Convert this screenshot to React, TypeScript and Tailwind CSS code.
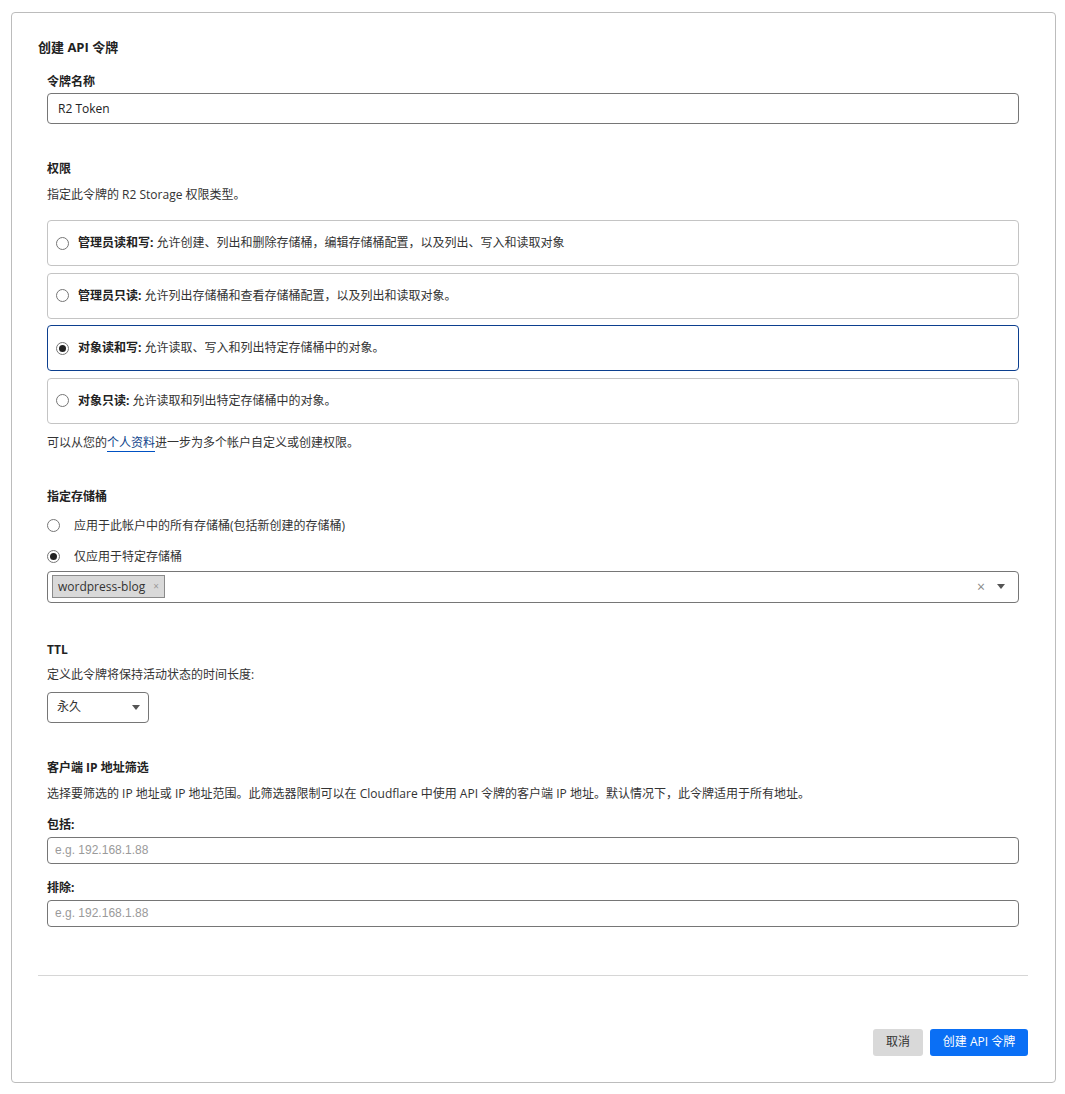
import React from "react";

const font = "font-['Open_Sans','Noto_Sans_CJK_SC',sans-serif]";

const Radio = ({ checked }: { checked?: boolean }) => (
  <span className="flex h-[13px] w-[13px] shrink-0 items-center justify-center rounded-full border border-[#767676] bg-white">
    {checked && <span className="h-[7px] w-[7px] rounded-full bg-[#222]" />}
  </span>
);

const Caret = () => <span className="h-0 w-0 border-x-[4px] border-t-[5px] border-x-transparent border-t-[#555]" />;

const permissions = [
  { title: "管理员读和写:", desc: "允许创建、列出和删除存储桶，编辑存储桶配置，以及列出、写入和读取对象" },
  { title: "管理员只读:", desc: "允许列出存储桶和查看存储桶配置，以及列出和读取对象。" },
  { title: "对象读和写:", desc: "允许读取、写入和列出特定存储桶中的对象。", checked: true },
  { title: "对象只读:", desc: "允许读取和列出特定存储桶中的对象。" },
];

const Label = ({ children, className = "" }: { children: React.ReactNode; className?: string }) => (
  <div className={`text-[12px] font-bold leading-[18px] text-[#222] ${className}`}>{children}</div>
);

const Text = ({ children, className = "" }: { children: React.ReactNode; className?: string }) => (
  <div className={`text-[12px] leading-[18px] text-[#333] ${className}`}>{children}</div>
);

export default function App() {
  return (
    <div className={`min-h-[1094px] bg-white pl-[11px] pt-[12px] ${font}`}>
      <div className="h-[1071px] w-[1045px] rounded-[4px] border border-[#bcbcbc] pl-[26px] pr-[27px] pt-[25px]">
        <div className="text-[13px] font-bold leading-[18px] text-[#222]">创建 API 令牌</div>

        <div className="pl-[9px] pr-[9px]">
          <Label className="mt-[17px]">令牌名称</Label>
          <div className="mt-[2px] flex h-[31px] items-center rounded-[4px] border border-[#767676] px-[10px] text-[12px] text-[#222]">
            R2 Token
          </div>

          <Label className="mt-[36px]">权限</Label>
          <Text className="mt-[8px]">指定此令牌的 R2 Storage 权限类型。</Text>

          <div className="mt-[16px] flex flex-col gap-[6.5px]">
            {permissions.map((p) => (
              <div
                key={p.title}
                className={`flex h-[46px] items-center gap-[8px] rounded-[4px] border pl-[8px] text-[12px] text-[#333] ${
                  p.checked ? "border-[#0c3f8f]" : "border-[#c4c4c4]"
                }`}
              >
                <Radio checked={p.checked} />
                <span className="ml-[1px]">
                  <span className="font-bold text-[#222]">{p.title}</span> {p.desc}
                </span>
              </div>
            ))}
          </div>

          <Text className="mt-[10px]">
            可以从您的<span className="border-b border-[#0051c3] text-[#0b3f8a]">个人资料</span>进一步为多个帐户自定义或创建权限。
          </Text>

          <Label className="mt-[36px]">指定存储桶</Label>
          <div className="mt-[8px] flex h-[24px] items-center gap-[14px] text-[12px] text-[#333]">
            <Radio />
            <span>应用于此帐户中的所有存储桶(包括新创建的存储桶)</span>
          </div>
          <div className="mt-[7px] flex h-[24px] items-center gap-[14px] text-[12px] text-[#333]">
            <Radio checked />
            <span>仅应用于特定存储桶</span>
          </div>
          <div className="mt-[2px] flex h-[32px] items-center rounded-[4px] border border-[#767676] pl-[4px] pr-[13px]">
            <span className="flex h-[23px] items-center gap-[8px] border border-[#8a8a8a] bg-[#d9d9d9] px-[5px] text-[12px] text-[#333]">
              wordpress-blog
              <span className="text-[10px] text-[#999]">×</span>
            </span>
            <span className="ml-auto text-[14px] leading-none text-[#888]">×</span>
            <span className="ml-[12px] flex items-center">
              <Caret />
            </span>
          </div>

          <Label className="mt-[38px]">TTL</Label>
          <Text className="mt-[7px]">定义此令牌将保持活动状态的时间长度:</Text>
          <div className="mt-[8px] flex h-[31px] w-[102px] items-center justify-between rounded-[4px] border border-[#767676] pl-[9px] pr-[8px] text-[12px] text-[#333]">
            <span>永久</span>
            <Caret />
          </div>

          <Label className="mt-[36px]">客户端 IP 地址筛选</Label>
          <Text className="mt-[8px]">
            选择要筛选的 IP 地址或 IP 地址范围。此筛选器限制可以在 Cloudflare 中使用 API 令牌的客户端 IP 地址。默认情况下，此令牌适用于所有地址。
          </Text>
          <Label className="mt-[13px] text-[11px]">包括:</Label>
          <input
            placeholder="e.g. 192.168.1.88"
            className="mt-[3px] block h-[27px] w-full rounded-[4px] border border-[#767676] px-[7px] font-['Liberation_Sans',sans-serif] text-[12px] outline-none placeholder:text-[#9a9a9a]"
          />
          <Label className="mt-[15px] text-[11px]">排除:</Label>
          <input
            placeholder="e.g. 192.168.1.88"
            className="mt-[3px] block h-[27px] w-full rounded-[4px] border border-[#767676] px-[7px] font-['Liberation_Sans',sans-serif] text-[12px] outline-none placeholder:text-[#9a9a9a]"
          />
        </div>

        <div className="mt-[48px] h-px bg-[#d6d6d6]" />

        <div className="mt-[53px] flex justify-end gap-[7px]">
          <button className="h-[27px] w-[50px] rounded-[3px] bg-[#d9d9d9] text-[12px] text-[#333]">取消</button>
          <button className="h-[27px] w-[98px] rounded-[3px] bg-[#0a6ff5] text-[12px] text-white">创建 API 令牌</button>
        </div>
      </div>
    </div>
  );
}
